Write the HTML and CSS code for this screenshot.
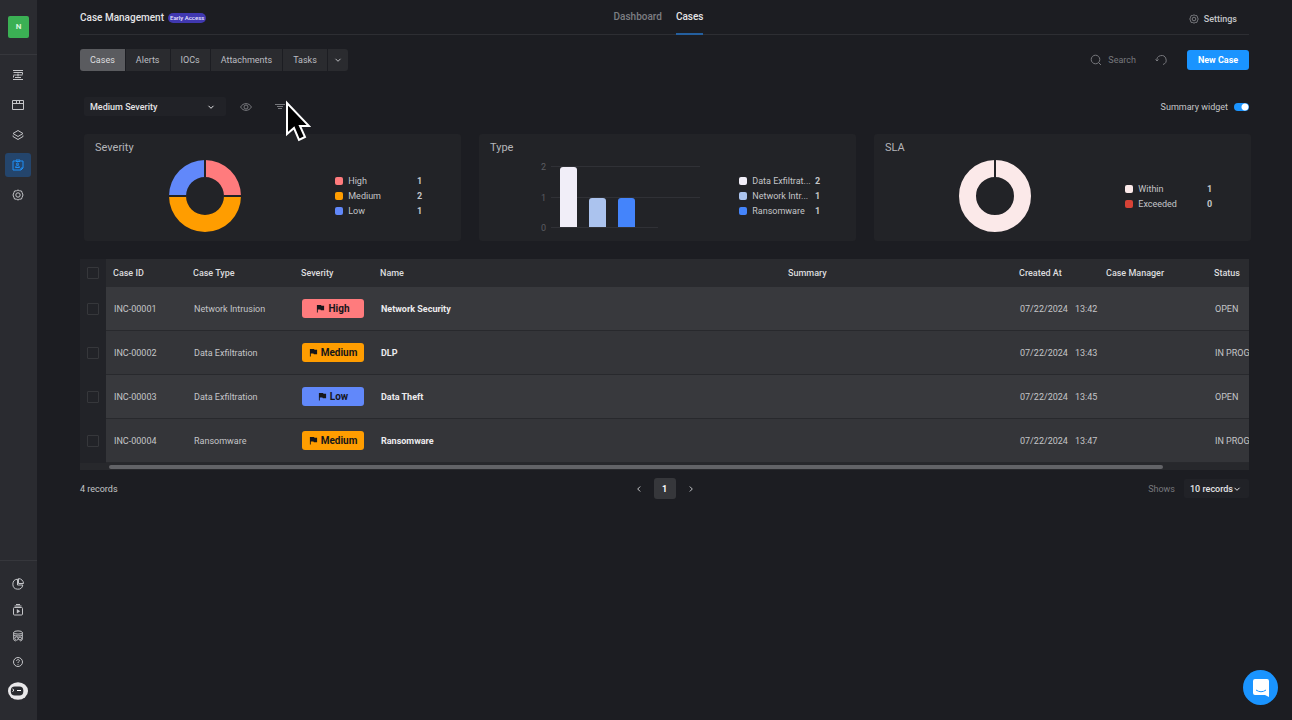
FILE: index.html
```html
<!DOCTYPE html>
<html lang="en">
<head>
    <meta charset="UTF-8">
    <meta name="viewport" content="width=device-width, initial-scale=1.0">
    <title>Case Management</title>
    <link rel="stylesheet" href="styles.css">
</head>
<body>
    <svg class="sprite" aria-hidden="true">
        <symbol id="chevron" viewBox="0 0 8 8"><path d="M1.5 2.8 4 5.3l2.5-2.5"/></symbol>
        <symbol id="flag" viewBox="0 0 10 10"><path class="solid" d="M1 1h4.6l.5 1H9v5H5.4l-.5-1H2v3.5H1z"/></symbol>
        <symbol id="gear" viewBox="0 0 12 12"><path d="m6 1 1.6.8 1.9.2.6 1.7L11 6l-.9 2.3-.6 1.7-1.900.2L6 11l-1.6-.8-1.9-.2-.6-1.7L1 6l.9-2.3.6-1.7 1.9-.2z"/><circle cx="6" cy="6" r="2.2"/></symbol>
    </svg>
    <div class="layout">
        <nav class="sidebar">
            <a class="logo" href="#">N</a>
            <div class="menu">
                <a href="#" aria-label="Playbooks"><svg viewBox="0 0 12 12"><path d="M1 1.5h10M1 10.5h10M3 8.500h6M1.500 3.500h9v2M1.500 6.500v2M1.500 6h3M7.500 6h3M6 4.500v3M4.500 6h3"/></svg></a>
                <a href="#" aria-label="Workspace"><svg viewBox="0 0 12 12"><path d="M.5 1.500h11v9H.5zM.5 4.500h11M4.500 1.500v3M7.500 1.500v3"/></svg></a>
                <a href="#" aria-label="Layers"><svg viewBox="0 0 12 12"><path d="m6 1.500 5 3-5 3-5-3zM1 6.500v1l5 3 5-3v-1"/></svg></a>
                <a class="active" href="#" aria-label="Cases"><svg viewBox="0 0 12 12"><path d="M3.500 2H1v9h8l2-2V2H8.500M4 1h4v1.500H4zM9 11V9h2M3.500 8.500c0-2.500 4-2.500 4 0z"/><circle cx="5.500" cy="5" r="1"/></svg></a>
                <a href="#" aria-label="Settings"><svg><use href="#gear"/></svg></a>
            </div>
            <div class="menu menu-bottom">
                <a href="#" aria-label="Reports"><svg viewBox="0 0 12 12"><path d="M5.500 1.200A5 5 0 1 0 10.800 7H5.500zM6.500.6V5.500h5A5 5 0 0 0 6.500.6z"/></svg></a>
                <a href="#" aria-label="Recordings"><svg viewBox="0 0 12 12"><rect x="1.500" y="3.500" width="9" height="7.500" rx="1"/><path d="M2.500 2h7M4 .5h4"/><path class="solid" d="m4.800 5 3.400 2.200-3.400 2.200z"/></svg></a>
                <a href="#" aria-label="Data"><svg viewBox="0 0 12 12"><ellipse cx="6" cy="2.500" rx="4.300" ry="1.600"/><path d="M1.700 2.500v6.800c0 1 1 1.500 2 1.700M10.300 2.500v6.800c0 1-1 1.500-2 1.700M1.700 5c1 1.300 7.600 1.300 8.600 0"/><circle cx="4.500" cy="8.500" r="1.700"/><circle cx="8" cy="8.500" r="1.500"/></svg></a>
                <a href="#" aria-label="Help"><svg viewBox="0 0 12 12"><circle cx="6" cy="6" r="4.500"/><path d="M4.600 5c0-2 2.900-1.800 2.800-.2C7.300 5.700 6 5.700 6 7M6 8v.8"/></svg></a>
                <a href="#" aria-label="Account"><svg class="avatar" viewBox="0 0 20 18"><ellipse class="face" cx="10" cy="9" rx="10" ry="8.800"/><rect class="visor" x="2.800" y="4.500" width="12.500" height="9" rx="4"/><path class="eyes" d="m4.500 7 1.500 1.300L4.500 9.500M9 8.500h4"/></svg></a>
            </div>
        </nav>

        <main class="main">
            <header class="header">
                <div class="title">
                    <h1>Case Management</h1>
                    <span class="tag">Early Access</span>
                </div>
                <nav class="pages">
                    <a href="#">Dashboard</a>
                    <a class="active" href="#">Cases</a>
                </nav>
                <a class="settings" href="#"><svg class="icon"><use href="#gear"/></svg>Settings</a>
            </header>

            <div class="toolbar">
                <div class="tabs">
                    <button class="active" type="button">Cases</button>
                    <button type="button">Alerts</button>
                    <button type="button">IOCs</button>
                    <button type="button">Attachments</button>
                    <button type="button">Tasks</button>
                    <button class="more" type="button" aria-label="More"><svg class="chevron"><use href="#chevron"/></svg></button>
                </div>
                <div class="actions">
                    <button class="plain" type="button"><svg class="icon" viewBox="0 0 12 12"><circle cx="5.500" cy="5.500" r="4.300"/><path d="m8.500 8.500 2.500 2.500"/></svg>Search</button>
                    <button class="plain" type="button" aria-label="Refresh"><svg class="icon" viewBox="0 0 12 12"><path d="M2 7a4.600 4.600 0 1 1 6 3.500M.5 5.500 2 7l1.500-1.500"/></svg></button>
                    <button class="primary" type="button">New Case</button>
                </div>
            </div>

            <div class="filters">
                <div class="select view-select">
                    <select aria-label="View"><option>Medium Severity</option></select>
                    <svg class="chevron"><use href="#chevron"/></svg>
                </div>
                <button class="plain" type="button" aria-label="Show columns"><svg class="icon" viewBox="0 0 12 12"><path d="M.6 6C3 1.500 9 1.500 11.400 6 9 10.500 3 10.500.6 6z"/><circle cx="6" cy="6" r="2"/></svg></button>
                <div class="filter">
                    <button class="plain" type="button" aria-label="Filter"><svg class="icon" viewBox="0 0 12 12"><path d="M1 3.500h10M3 5.500h6M4 7.500h4"/></svg></button>
                    <svg class="cursor" viewBox="0 0 26 42"><path d="M2 3v31l7-6 5 12 6-3-5-11h9z"/></svg>
                </div>
                <label class="toggle">Summary widget <input type="checkbox" role="switch" checked></label>
            </div>

            <section class="widgets">
                <article class="card">
                    <h2>Severity</h2>
                    <div class="chart">
                        <svg class="donut" viewBox="0 0 72 72">
                            <path class="high" d="M36 0A36 36 0 0 1 72 36H55A19 19 0 0 0 36 17z"/>
                            <path class="medium" d="M72 36A36 36 0 0 1 0 36H17A19 19 0 0 0 55 36z"/>
                            <path class="low" d="M0 36A36 36 0 0 1 36 0V17A19 19 0 0 0 17 36z"/>
                            <path class="split" d="M36 0v17M0 36h17M55 36h17"/>
                        </svg>
                    </div>
                    <ul class="legend">
                        <li><i class="high"></i>High<b>1</b></li>
                        <li><i class="medium"></i>Medium<b>2</b></li>
                        <li><i class="low"></i>Low<b>1</b></li>
                    </ul>
                </article>
                <article class="card card-bars">
                    <h2>Type</h2>
                    <div class="chart">
                        <svg class="bars" viewBox="0 0 160 72">
                            <path class="grid" d="M11 6.500h149M11 37.500h149M11 67.500h107"/>
                            <text x="1" y="10">2</text>
                            <text x="1" y="41">1</text>
                            <text x="1" y="71">0</text>
                            <path class="exfil" d="M20 67V10q0-3 3-3h11q3 0 3 3v57z"/>
                            <path class="intrusion" d="M49 67V41q0-3 3-3h11q3 0 3 3v26z"/>
                            <path class="ransom" d="M78 67V41q0-3 3-3h11q3 0 3 3v26z"/>
                        </svg>
                    </div>
                    <ul class="legend">
                        <li><i class="exfil"></i>Data Exfiltrat...<b>2</b></li>
                        <li><i class="intrusion"></i>Network Intr...<b>1</b></li>
                        <li><i class="ransom"></i>Ransomware<b>1</b></li>
                    </ul>
                </article>
                <article class="card">
                    <h2>SLA</h2>
                    <div class="chart">
                        <svg class="donut" viewBox="0 0 72 72">
                            <circle class="ring" cx="36" cy="36" r="27.500"/>
                            <path class="split" d="M36 0v18"/>
                        </svg>
                    </div>
                    <ul class="legend">
                        <li><i class="within"></i>Within<b>1</b></li>
                        <li><i class="exceeded"></i>Exceeded<b>0</b></li>
                    </ul>
                </article>
            </section>

            <div class="table-wrap">
                <table class="cases">
                    <thead>
                        <tr>
                            <th class="col-check"><input type="checkbox" aria-label="Select all"></th>
                            <th class="col-id">Case ID</th>
                            <th class="col-type">Case Type</th>
                            <th class="col-severity">Severity</th>
                            <th>Name</th>
                            <th class="col-summary">Summary</th>
                            <th class="col-created">Created At</th>
                            <th class="col-manager">Case Manager</th>
                            <th class="col-status">Status</th>
                        </tr>
                    </thead>
                    <tbody>
                        <tr>
                            <td><input type="checkbox" aria-label="Select INC-00001"></td>
                            <td>INC-00001</td>
                            <td>Network Intrusion</td>
                            <td><span class="badge high"><svg><use href="#flag"/></svg>High</span></td>
                            <td class="name">Network Security</td>
                            <td></td>
                            <td><span class="date">07/22/2024</span>13:42</td>
                            <td></td>
                            <td>OPEN</td>
                        </tr>
                        <tr>
                            <td><input type="checkbox" aria-label="Select INC-00002"></td>
                            <td>INC-00002</td>
                            <td>Data Exfiltration</td>
                            <td><span class="badge medium"><svg><use href="#flag"/></svg>Medium</span></td>
                            <td class="name">DLP</td>
                            <td></td>
                            <td><span class="date">07/22/2024</span>13:43</td>
                            <td></td>
                            <td>IN PROGRESS</td>
                        </tr>
                        <tr>
                            <td><input type="checkbox" aria-label="Select INC-00003"></td>
                            <td>INC-00003</td>
                            <td>Data Exfiltration</td>
                            <td><span class="badge low"><svg><use href="#flag"/></svg>Low</span></td>
                            <td class="name">Data Theft</td>
                            <td></td>
                            <td><span class="date">07/22/2024</span>13:45</td>
                            <td></td>
                            <td>OPEN</td>
                        </tr>
                        <tr>
                            <td><input type="checkbox" aria-label="Select INC-00004"></td>
                            <td>INC-00004</td>
                            <td>Ransomware</td>
                            <td><span class="badge medium"><svg><use href="#flag"/></svg>Medium</span></td>
                            <td class="name">Ransomware</td>
                            <td></td>
                            <td><span class="date">07/22/2024</span>13:47</td>
                            <td></td>
                            <td>IN PROGRESS</td>
                        </tr>
                    </tbody>
                </table>
            </div>
            <div class="scrollbar"><div class="thumb"></div></div>

            <footer class="footer">
                <span>4 records</span>
                <div class="pager">
                    <button type="button" aria-label="Previous"><svg class="chevron prev"><use href="#chevron"/></svg></button>
                    <button class="active" type="button">1</button>
                    <button type="button" aria-label="Next"><svg class="chevron next"><use href="#chevron"/></svg></button>
                </div>
                <div class="page-size">
                    <label for="size">Shows</label>
                    <div class="select">
                        <select id="size"><option>10 records</option></select>
                        <svg class="chevron"><use href="#chevron"/></svg>
                    </div>
                </div>
            </footer>
        </main>
    </div>

    <button class="chat" type="button" aria-label="Open chat">
        <svg viewBox="0 0 16 18"><path class="bubble" d="M2 0h12q2 0 2 2v16l-4-2H2q-2 0-2-2V2q0-2 2-2z"/><path class="smile" d="M3 11q5 3.500 10 0"/></svg>
    </button>
</body>
</html>
```
FILE: styles.css
```css
* {
    padding: 0;
    margin: 0;
    box-sizing: border-box;
}

body {
    background: #1c1d22;
    color: #c4c5c8;
    font-family: Roboto, "Liberation Sans", sans-serif;
    font-size: 9px;
    line-height: 12px;
}

a {
    color: inherit;
    text-decoration: none;
}

button,
select {
    border: 0;
    background: none;
    color: inherit;
    font: inherit;
}

svg {
    display: block;
    fill: none;
    stroke: currentColor;
}

.sprite {
    position: absolute;
    width: 0;
    height: 0;
}

.solid {
    fill: currentColor;
    stroke: none;
}

.icon {
    width: 12px;
    height: 12px;
}

.chevron {
    width: 8px;
    height: 8px;
}

.layout {
    display: flex;
    min-height: 100vh;
}

/* sidebar */
.sidebar {
    flex: none;
    display: flex;
    flex-direction: column;
    width: 37px;
    background: #2a2b30;
}

.logo {
    margin: 16px 8px;
    height: 22px;
    border-radius: 2px;
    background: #3bb054;
    color: #d8f5dd;
    font-size: 8px;
    font-weight: 700;
    line-height: 22px;
    text-align: center;
}

.menu {
    display: flex;
    flex-direction: column;
    align-items: center;
    gap: 6px;
    padding: 8px 1px 0 0;
    border-top: 1px solid #36373c;
}

.menu a {
    display: grid;
    place-items: center;
    width: 26px;
    height: 24px;
    border-radius: 3px;
}

.menu svg {
    width: 12px;
    height: 12px;
}

.menu a.active {
    background: #24456c;
    color: #1f8ff5;
}

.menu-bottom {
    gap: 2px;
    margin-top: auto;
    padding: 11px 1px 14px 0;
}

.menu-bottom a:last-child {
    height: 30px;
}

.menu .avatar {
    width: 20px;
    height: 18px;
}

.avatar .face {
    fill: #e9e8ea;
    stroke: none;
}

.avatar .visor {
    fill: #2a2b30;
    stroke: none;
}

.avatar .eyes {
    stroke: #fff;
}

/* header */
.main {
    flex: 1;
    min-width: 0;
    padding: 0 43px;
}

.header {
    display: grid;
    grid-template-columns: 1fr auto 1fr;
    align-items: center;
    height: 35px;
    padding-right: 12px;
    border-bottom: 1px solid #2d2e33;
}

.title {
    display: flex;
    align-items: center;
    gap: 4px;
}

h1 {
    color: #e4e4e6;
    font-size: 10px;
    font-weight: 500;
}

.tag {
    padding: 0 2px;
    border-radius: 5px;
    background: #4038b0;
    color: #e6e4ff;
    font-size: 6px;
    font-weight: 500;
    line-height: 10px;
}

.pages {
    display: flex;
    gap: 14px;
    color: #7c7d82;
    font-size: 10px;
    font-weight: 500;
    line-height: 34px;
}

.pages a {
    height: 35px;
}

.pages .active {
    border-bottom: 2px solid #245f9f;
    color: #e4e4e6;
}

.settings {
    display: flex;
    align-items: center;
    justify-self: end;
    gap: 5px;
    padding-top: 3px;
    font-weight: 500;
}

.settings .icon {
    width: 10px;
    height: 10px;
    color: #8c8d92;
}

/* toolbar */
.toolbar {
    display: flex;
    justify-content: space-between;
    align-items: center;
    margin-top: 14px;
}

.tabs {
    display: flex;
    gap: 1px;
    border-radius: 3px;
    overflow: hidden;
}

.tabs button {
    padding: 0 10px;
    height: 22px;
    background: #2a2b2f;
    color: #bcbdc1;
    font-weight: 400;
}

.tabs .active {
    background: #5a5b5f;
    color: #dededf;
}

.tabs .more {
    padding: 0 6px;
}

.actions {
    display: flex;
    align-items: center;
    gap: 19px;
}

.plain {
    display: flex;
    align-items: center;
    gap: 6px;
    color: #77787d;
}

.primary {
    width: 62px;
    height: 20px;
    margin-left: 1px;
    border-radius: 3px;
    background: #1a94ff;
    color: #fff;
    font-weight: 700;
}

/* filters */
.filters {
    display: flex;
    align-items: center;
    gap: 22px;
    margin-top: 26px;
    padding-left: 4px;
}

.select {
    display: grid;
    align-items: center;
    border-radius: 2px;
    background: #212227;
    color: #e4e4e6;
    font-weight: 500;
}

.select select,
.select .chevron {
    grid-area: 1 / 1;
}

.select select {
    width: 100%;
    height: 19px;
    padding: 0 16px 0 6px;
    appearance: none;
}

.select .chevron {
    justify-self: end;
    margin-right: 8px;
    pointer-events: none;
}

.view-select {
    width: 142px;
    margin-right: -8px;
}

.view-select .chevron {
    margin-right: 11px;
}

.filter {
    position: relative;
}

.cursor {
    position: absolute;
    left: 11px;
    top: -1px;
    z-index: 1;
    width: 26px;
    height: 42px;
    fill: #000;
    stroke: #fff;
    stroke-width: 2px;
}

.toggle {
    display: flex;
    align-items: center;
    gap: 6px;
    margin-left: auto;
}

.toggle input {
    width: 15px;
    height: 8px;
    border-radius: 4px;
    background: radial-gradient(circle at 11px 4px, #fff 3px, #1a94ff 4px);
    appearance: none;
}

/* widgets */
.widgets {
    display: grid;
    grid-template-columns: repeat(3, 1fr);
    gap: 18px;
    margin: 18px -2px 18px 4px;
}

.card {
    display: grid;
    grid-template-columns: 64% 36%;
    align-items: center;
    padding-bottom: 9px;
    border-radius: 3px;
    background: #222327;
}

.card h2 {
    grid-column: 1 / -1;
    padding: 2px 0 0 11px;
    color: #b4b5b9;
    font-size: 11px;
    font-weight: 400;
    line-height: 24px;
}

.donut {
    width: 72px;
    height: 72px;
    margin: 0 auto;
    stroke: none;
}

.donut .split {
    stroke: #222327;
    stroke-width: 2px;
}

.donut .ring {
    stroke: #fbe9e9;
    stroke-width: 17px;
}

.bars {
    width: 160px;
    height: 72px;
    stroke: none;
}

.bars .grid {
    stroke: #303136;
}

.bars text {
    fill: #5c5d62;
    font-size: 9px;
}

.card-bars .chart {
    padding-left: 61px;
}

.legend {
    display: grid;
    gap: 3px;
    width: 97px;
    padding-left: 10px;
    list-style: none;
}

.card-bars .legend {
    width: 100px;
    padding-left: 19px;
}

.legend li {
    display: flex;
    align-items: center;
}

.legend i {
    width: 8px;
    height: 8px;
    margin-right: 5px;
    border-radius: 2px;
}

.legend b {
    margin-left: auto;
    font-weight: 700;
}

.high {
    background: #ff7b7d;
    fill: #ff7b7d;
}

.medium {
    background: #ff9d00;
    fill: #ff9d00;
}

.low {
    background: #6188fa;
    fill: #6188fa;
}

.exfil {
    background: #f1eef8;
    fill: #f1eef8;
}

.intrusion {
    background: #abc3ee;
    fill: #abc3ee;
}

.ransom {
    background: #4484fb;
    fill: #4484fb;
}

.within {
    background: #fbe9e9;
}

.exceeded {
    background: #d64236;
}

/* cases table */
.table-wrap {
    overflow: hidden;
}

.cases {
    width: calc(100% + 94px);
    table-layout: fixed;
    border-collapse: separate;
    border-spacing: 0;
    white-space: nowrap;
}

.cases th {
    height: 28px;
    padding-left: 7px;
    background: #2a2b2f;
    color: #dcdcde;
    font-weight: 500;
    text-align: left;
}

.cases td {
    height: 44px;
    padding-left: 8px;
    border-bottom: 1px solid #28292d;
    background: #343539;
}

.cases tr:nth-child(odd) td {
    background: #38393d;
}

.cases tr td:first-child,
.cases tr th:first-child {
    padding-left: 7px;
    border-bottom: 0;
    background: #222328;
}

.cases input {
    display: block;
    width: 12px;
    height: 12px;
    border: 1px solid #36373b;
    border-radius: 1px;
    appearance: none;
}

.col-check {
    width: 26px;
}

.col-id {
    width: 80px;
}

.col-type {
    width: 108px;
}

.col-severity {
    width: 79px;
}

.col-summary {
    width: 231px;
}

.col-created {
    width: 87px;
}

.col-manager {
    width: 108px;
}

.col-status {
    width: 136px;
}

.cases .name {
    color: #ececee;
    font-weight: 700;
}

.date {
    margin-right: 7px;
}

.badge {
    display: flex;
    align-items: center;
    justify-content: center;
    gap: 3px;
    width: 62px;
    height: 19px;
    border-radius: 3px;
    color: #16161a;
    font-size: 10px;
    font-weight: 700;
}

.badge svg {
    width: 9px;
    height: 9px;
}

.scrollbar {
    padding: 2px 86px 1px 29px;
    background: #27282c;
}

.thumb {
    height: 4px;
    border-radius: 2px;
    background: #626367;
}

/* footer */
.footer {
    display: grid;
    grid-template-columns: 1fr auto 1fr;
    align-items: center;
    margin-top: 8px;
}

.pager {
    display: flex;
    gap: 4px;
}

.pager button {
    display: grid;
    place-items: center;
    width: 22px;
    height: 21px;
    border-radius: 3px;
}

.pager .active {
    background: #36373b;
    color: #fff;
    font-weight: 700;
}

.prev {
    transform: rotate(90deg);
}

.next {
    transform: rotate(-90deg);
}

.page-size {
    display: flex;
    align-items: center;
    justify-self: end;
    gap: 9px;
}

.page-size label {
    color: #77787d;
}

.page-size .select {
    width: 65px;
}

/* chat launcher */
.chat {
    position: fixed;
    right: 14px;
    bottom: 15px;
    display: grid;
    place-items: center;
    width: 35px;
    height: 35px;
    border-radius: 50%;
    background: #1a94ff;
}

.chat svg {
    width: 16px;
    height: 18px;
}

.bubble {
    fill: #fff;
    stroke: none;
}

.smile {
    stroke: #1a94ff;
}
```
